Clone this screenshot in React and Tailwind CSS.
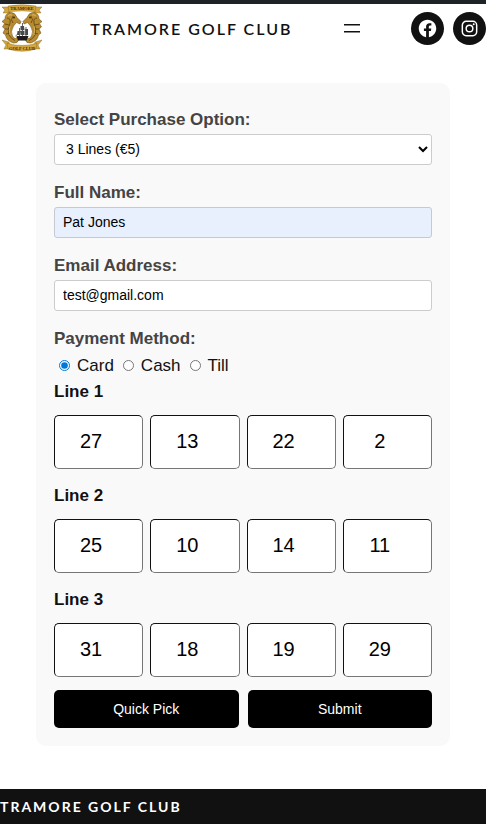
import {useState} from "react";

const initialLines = [
  [27, 13, 22, 2],
  [25, 10, 14, 11],
  [31, 18, 19, 29],
];

const paymentMethods = ["Card", "Cash", "Till"];

const Seahorse = () => {
  return (
    <>
      <path
        d="M20 17.5 L19 20 L15.500 18.500 L12.500 22 Q9 28 11.500 32 Q14 36 15.500 33.500 Q17.500 33 17.500 36 Q17 39.500 12.500 39 Q5.500 37 4.500 31 L2 29 L4 25 L1.500 23 L3.500 19.500 L1 17.500 L4 15 Q4 9 10 8.500 Q14 8.500 16 13.500 Z"
        fill="#b98b2f"
        stroke="#5f4514"
        strokeWidth="0.5"
      />
      <path
        d="M6 14 Q10 14 9 19 Q6 26 8 31 Q10 35 14 36.500 M4 20 L8 21 M4 25 L8 25 M5 30 L9 29 M12 12 Q9 16 12 19"
        fill="none"
        stroke="#5a4211"
        strokeWidth="0.8"
      />
      <path d="M7 12 Q9 10 11 11 M9 22 Q7.500 26 9 31" fill="none" stroke="#e6c775" strokeWidth="0.7" />
      <circle cx="13" cy="13.500" r="0.9" fill="#33250a" />
    </>
  );
};

const Crest = () => {
  return (
    <svg
      viewBox="0 0 42 48"
      className="ml-px h-12 w-[42px]"
      role="img"
      aria-label="Tramore Golf Club crest"
    >
      <g fill="#d3a63e" stroke="#80601d" strokeWidth="0.4">
        <path d="M1 3 L9 3 L9 9 L2 9 L4 6 Z" />
        <path d="M41 3 L33 3 L33 9 L40 9 L38 6 Z" />
        <path d="M7 2 Q21 -0.500 35 2 L34 8 Q21 5.500 8 8 Z" />
      </g>
      <Seahorse />
      <g transform="matrix(-1 0 0 1 42 0)">
        <Seahorse />
      </g>
      <g fill="#d3a63e" stroke="#80601d" strokeWidth="0.4">
        <path d="M1 36 L8 38 L9 45 L3 45 L5 41 Z" />
        <path d="M41 36 L34 38 L33 45 L39 45 L37 41 Z" />
        <path d="M6 39 Q21 44 36 39 L35 45 Q21 49.500 7 45 Z" />
      </g>
      <g
        fill="#3d2c08"
        fontFamily="Liberation Serif, serif"
        fontWeight="bold"
        fontSize="4.5"
        textAnchor="middle"
      >
        <text x="21" y="5.8">TRAMORE</text>
        <text x="21" y="45.8">GOLF CLUB</text>
      </g>
      <path d="M15.500 32 H27.500 L25.500 36.500 H17 Z" fill="#1c1c1c" />
      <path
        d="M21.500 19 V33 M18.500 24 V33 M25 23 V33 M14.500 32 L18 29"
        stroke="#222"
        strokeWidth="0.7"
      />
      <path
        d="M19.500 22 H23 L23.500 26 H19.500 Z M19 26.800 H23.500 V31 H19.500 Z M16.500 27 H18.500 V31 H16 Z M24.200 25 H27 V31 H24.200 Z"
        fill="#4a4a4a"
      />
    </svg>
  );
};

const FacebookIcon = () => {
  return (
    <svg viewBox="0 0 24 24" className="size-[21px]" fill="currentColor" aria-hidden="true">
      <path d="M12 2C6.5 2 2 6.5 2 12c0 5 3.7 9.1 8.4 9.9v-7H7.9V12h2.5V9.8c0-2.5 1.5-3.9 3.8-3.9 1.1 0 2.2.2 2.2.2v2.5h-1.3c-1.2 0-1.6.8-1.6 1.6V12h2.8l-.4 2.9h-2.3v7C18.3 21.1 22 17 22 12c0-5.5-4.5-10-10-10z" />
    </svg>
  );
};

const InstagramIcon = () => {
  return (
    <svg viewBox="0 0 24 24" className="size-[21px]" fill="none" aria-hidden="true">
      <rect
        x="3.8"
        y="3.8"
        width="16.4"
        height="16.4"
        rx="4.4"
        stroke="currentColor"
        strokeWidth="1.7"
      />
      <circle cx="12" cy="12" r="3.8" stroke="currentColor" strokeWidth="1.7" />
      <circle cx="16.8" cy="7.2" r="1.1" fill="currentColor" />
    </svg>
  );
};

const SocialLink = ({label, children}) => {
  return (
    <a
      href="#"
      aria-label={label}
      className="flex size-[33px] items-center justify-center rounded-full bg-[#111] text-white"
    >
      {children}
    </a>
  );
};

const Header = () => {
  return (
    <header className="flex items-start justify-between border-t-4 border-[#1d2327] pb-[31px]">
      <Crest />
      <a
        href="#"
        className="mt-[11px] font-[Lato,sans-serif] text-base leading-7 font-semibold tracking-[2px] text-[#111]"
      >
        TRAMORE GOLF CLUB
      </a>
      <button type="button" aria-label="Open menu" className="mt-3 text-[#111]">
        <svg viewBox="0 0 24 24" className="size-6" fill="currentColor" aria-hidden="true">
          <path d="M4 8h16v1.5H4zM4 15h16v1.5H4z" />
        </svg>
      </button>
      <div className="mt-2 flex gap-[9px]">
        <SocialLink label="Facebook">
          <FacebookIcon />
        </SocialLink>
        <SocialLink label="Instagram">
          <InstagramIcon />
        </SocialLink>
      </div>
    </header>
  );
};

const Field = ({id, label, children}) => {
  return (
    <div className="mb-3.5">
      <label htmlFor={id} className="mb-px block pt-px font-bold text-[#444]">
        {label}
      </label>
      {children}
    </div>
  );
};

const Line = ({index, numbers, onChange}) => {
  return (
    <fieldset className="mb-[13px]">
      <legend className="mb-2.5 pt-px font-bold text-[#111]">Line {index + 1}</legend>
      <div className="grid grid-cols-4 gap-[7px]">
        {numbers.map((number, i) => (
          <input
            key={i}
            type="number"
            min="1"
            max="32"
            aria-label={`Line ${index + 1} number ${i + 1}`}
            className="h-[54px] w-full min-w-0 rounded-[5px] border border-t-[#111] border-r-[#767676] border-b-[#767676] border-l-[#111] bg-white pb-0.5 text-center text-xl text-black"
            value={number}
            onChange={event => onChange(index, i, event.target.value)}
          />
        ))}
      </div>
    </fieldset>
  );
};

const App = () => {
  const [option, setOption] = useState("3");
  const [name, setName] = useState("Pat Jones");
  const [email, setEmail] = useState("test@gmail.com");
  const [payment, setPayment] = useState("Card");
  const [lines, setLines] = useState(initialLines);

  const handleNumberChange = (line, position, value) => {
    setLines(
      lines.map((numbers, i) =>
        i === line ? numbers.map((n, j) => (j === position ? value : n)) : numbers
      )
    );
  };

  const handleQuickPick = () => {
    setLines(
      lines.map(() => {
        const picked = new Set();
        while (picked.size < 4) {
          picked.add(Math.floor(Math.random() * 32) + 1);
        }
        return [...picked];
      })
    );
  };

  return (
    <div className="flex min-h-screen flex-col bg-white font-['Liberation_Sans',Arial,sans-serif]">
      <Header />
      <main className="mb-[43px] px-9">
        <form
          className="rounded-[10px] bg-[#f9f9f9] px-[18px] pt-[23px] pb-[18px] text-[17px] leading-[26px]"
          onSubmit={event => event.preventDefault()}
        >
          <Field id="option" label="Select Purchase Option:">
            <select
              id="option"
              className="block h-[31px] w-full rounded-[3px] border border-[#ccc] bg-white px-[7px] pb-0.5 text-sm text-black"
              value={option}
              onChange={event => setOption(event.target.value)}
            >
              <option value="3">3 Lines (€5)</option>
            </select>
          </Field>
          <Field id="name" label="Full Name:">
            <input
              id="name"
              type="text"
              className="block h-[31px] w-full rounded-[3px] border border-[#c5c9d3] bg-[#e8f0fe] px-2 pb-0.5 text-sm text-black"
              value={name}
              onChange={event => setName(event.target.value)}
            />
          </Field>
          <Field id="email" label="Email Address:">
            <input
              id="email"
              type="email"
              className="block h-[31px] w-full rounded-[3px] border border-[#ccc] bg-white px-2 pb-0.5 text-sm text-black"
              value={email}
              onChange={event => setEmail(event.target.value)}
            />
          </Field>
          <fieldset>
            <legend className="mb-px pt-px font-bold text-[#444]">Payment Method:</legend>
            <div className="flex gap-2 pl-1 leading-[25px]">
              {paymentMethods.map(method => (
                <label key={method} className="flex items-center gap-1.5 text-[#111]">
                  <input
                    type="radio"
                    name="payment"
                    className="mx-px size-[11px] accent-[#0078d7]"
                    checked={payment === method}
                    onChange={() => setPayment(method)}
                  />
                  {method}
                </label>
              ))}
            </div>
          </fieldset>
          {lines.map((numbers, i) => (
            <Line key={i} index={i} numbers={numbers} onChange={handleNumberChange} />
          ))}
          <div className="grid grid-cols-2 gap-[9px] text-sm">
            <button
              type="button"
              className="h-[38px] rounded-[5px] bg-black text-white"
              onClick={handleQuickPick}
            >
              Quick Pick
            </button>
            <button type="submit" className="h-[38px] rounded-[5px] bg-black text-white">
              Submit
            </button>
          </div>
        </form>
      </main>
      <footer className="grow bg-[#111] pt-1">
        <a
          href="#"
          className="block font-[Lato,sans-serif] text-sm leading-7 font-bold tracking-[2px] text-white"
        >
          TRAMORE GOLF CLUB
        </a>
      </footer>
    </div>
  );
};

export default App;
